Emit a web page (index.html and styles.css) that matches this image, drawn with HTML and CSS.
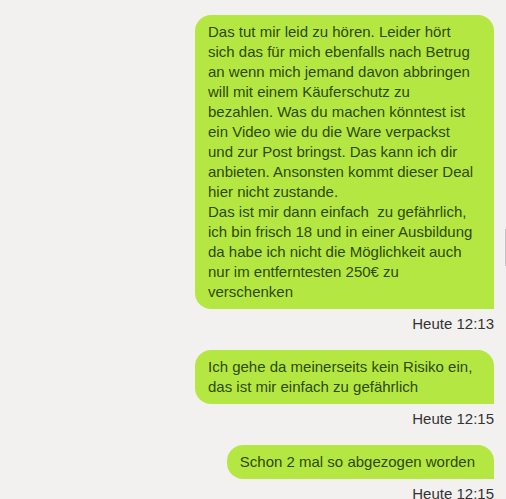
FILE: index.html
```html
<!DOCTYPE html>
<html lang="de">
<head>
    <meta charset="UTF-8">
    <meta name="viewport" content="width=device-width, initial-scale=1.0">
    <title>Chat</title>
    <link rel="stylesheet" href="styles.css">
</head>
<body>
<div class="chat">
    <div class="msg">
        <div class="bubble">Das tut mir leid zu hören. Leider hört sich das für mich ebenfalls nach Betrug an wenn mich jemand davon abbringen will mit einem Käuferschutz zu bezahlen. Was du machen könntest ist ein Video wie du die Ware verpackst und zur Post bringst. Das kann ich dir anbieten. Ansonsten kommt dieser Deal hier nicht zustande.<br>Das ist mir dann einfach &nbsp;zu gefährlich, ich bin frisch 18 und in einer Ausbildung da habe ich nicht die Möglichkeit auch nur im entferntesten 250€ zu verschenken</div>
        <div class="time">Heute 12:13</div>
    </div>
    <div class="msg">
        <div class="bubble">Ich gehe da meinerseits kein Risiko ein, das ist mir einfach zu gefährlich</div>
        <div class="time">Heute 12:15</div>
    </div>
    <div class="msg">
        <div class="bubble">Schon 2 mal so abgezogen worden</div>
        <div class="time">Heute 12:15</div>
    </div>
</div>
<div class="handle"></div>
</body>
</html>
```

FILE: styles.css
```css
body{
    margin: 0;
    background-color: #f2f1ef;
    font-family: 'Liberation Sans', Arial, sans-serif;
    font-size: 15px;
    line-height: 20px;
    overflow: hidden;
}
.chat{
    display: flex;
    flex-direction: column;
    align-items: flex-end;
    padding: 15px 12px 0 0;
    gap: 16px;
}
.msg{
    display: flex;
    flex-direction: column;
    align-items: flex-end;
    gap: 5px;
}
.bubble{
    max-width: 267px;
    padding: 7px 19px 7px 13px;
    background-color: #b5e743;
    color: #2d4a06;
    border-radius: 16px 16px 0 16px;
}
.time{
    color: #333;
}
.handle{
    position: absolute;
    right: 0;
    top: 229px;
    width: 1px;
    height: 37px;
    background-color: #c4c4c4;
}
```
